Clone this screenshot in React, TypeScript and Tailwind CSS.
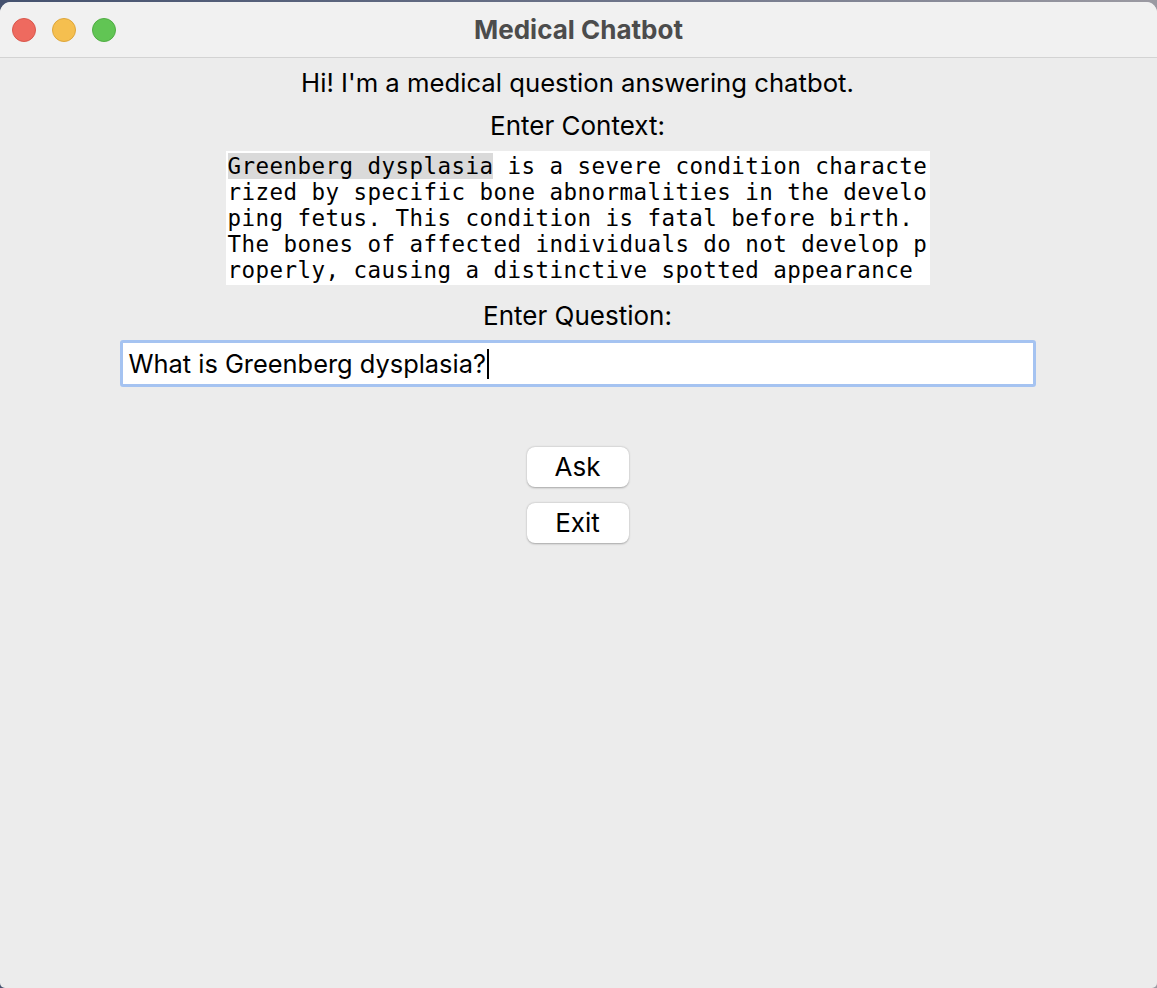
import React from 'react'

const contextLines = [
  'rized by specific bone abnormalities in the develo',
  'ping fetus. This condition is fatal before birth.',
  'The bones of affected individuals do not develop p',
  'roperly, causing a distinctive spotted appearance',
]

export default function App() {
  return (
    <div className="w-[1157px] h-[988px] bg-gradient-to-r from-[#45526f] via-[#6b7288] to-[#9b9aa2] pt-[2px] overflow-hidden">
      <div className="h-[986px] flex flex-col rounded-t-[11px] rounded-b-[5px] overflow-hidden bg-[#ececec] font-['Inter',sans-serif]">
        {/* Title bar */}
        <div className="relative h-[56px] shrink-0 bg-[#f1f1f1] border-b border-[#d3d3d3] flex items-center justify-center">
          <div className="absolute left-[12px] top-[16px] flex gap-[16px]">
            <span className="w-[24px] h-[24px] rounded-full bg-[#ee6a5f] border border-[#d9574c]" />
            <span className="w-[24px] h-[24px] rounded-full bg-[#f5bf4f] border border-[#dea63a]" />
            <span className="w-[24px] h-[24px] rounded-full bg-[#61c554] border border-[#50ad43]" />
          </div>
          <h1 className="text-[26px] font-bold text-[#4c4c4c] leading-none">Medical Chatbot</h1>
        </div>

        {/* Content */}
        <div className="flex flex-col items-center text-black pr-[2px]">
          <p className="mt-[11px] text-[25.7px] leading-[28px]">Hi! I'm a medical question answering chatbot.</p>
          <p className="mt-[15px] text-[26px] leading-[28px]">Enter Context:</p>

          <div className="mt-[11px] w-[704px] h-[134px] bg-white p-[2px] font-['DejaVu_Sans_Mono',monospace] text-[22.5px] leading-[26px] tracking-[0.45px] whitespace-pre overflow-hidden">
            <div>
              <span className="bg-[#dadada]">Greenberg dysplasia</span> is a severe condition characte
            </div>
            {contextLines.map((line, i) => (
              <div key={i}>{line}</div>
            ))}
          </div>

          <p className="mt-[17px] text-[26px] leading-[28px]">Enter Question:</p>

          <div className="mt-[10px] w-[916px] h-[47px] rounded-[3px] border-[3px] border-[#a5c3f1] bg-white flex items-center pl-[6px]">
            <span className="text-[25.4px] leading-none">What is Greenberg dysplasia?</span>
            <span className="w-[2px] h-[30px] bg-black ml-[1px]" />
          </div>

          <button className="mt-[60px] w-[102px] h-[40px] rounded-[8px] bg-white text-[26px] leading-none shadow-[0_0.5px_2px_rgba(0,0,0,0.3)]">
            Ask
          </button>
          <button className="mt-[16px] w-[102px] h-[40px] rounded-[8px] bg-white text-[26px] leading-none shadow-[0_0.5px_2px_rgba(0,0,0,0.3)]">
            Exit
          </button>
        </div>
      </div>
    </div>
  )
}
